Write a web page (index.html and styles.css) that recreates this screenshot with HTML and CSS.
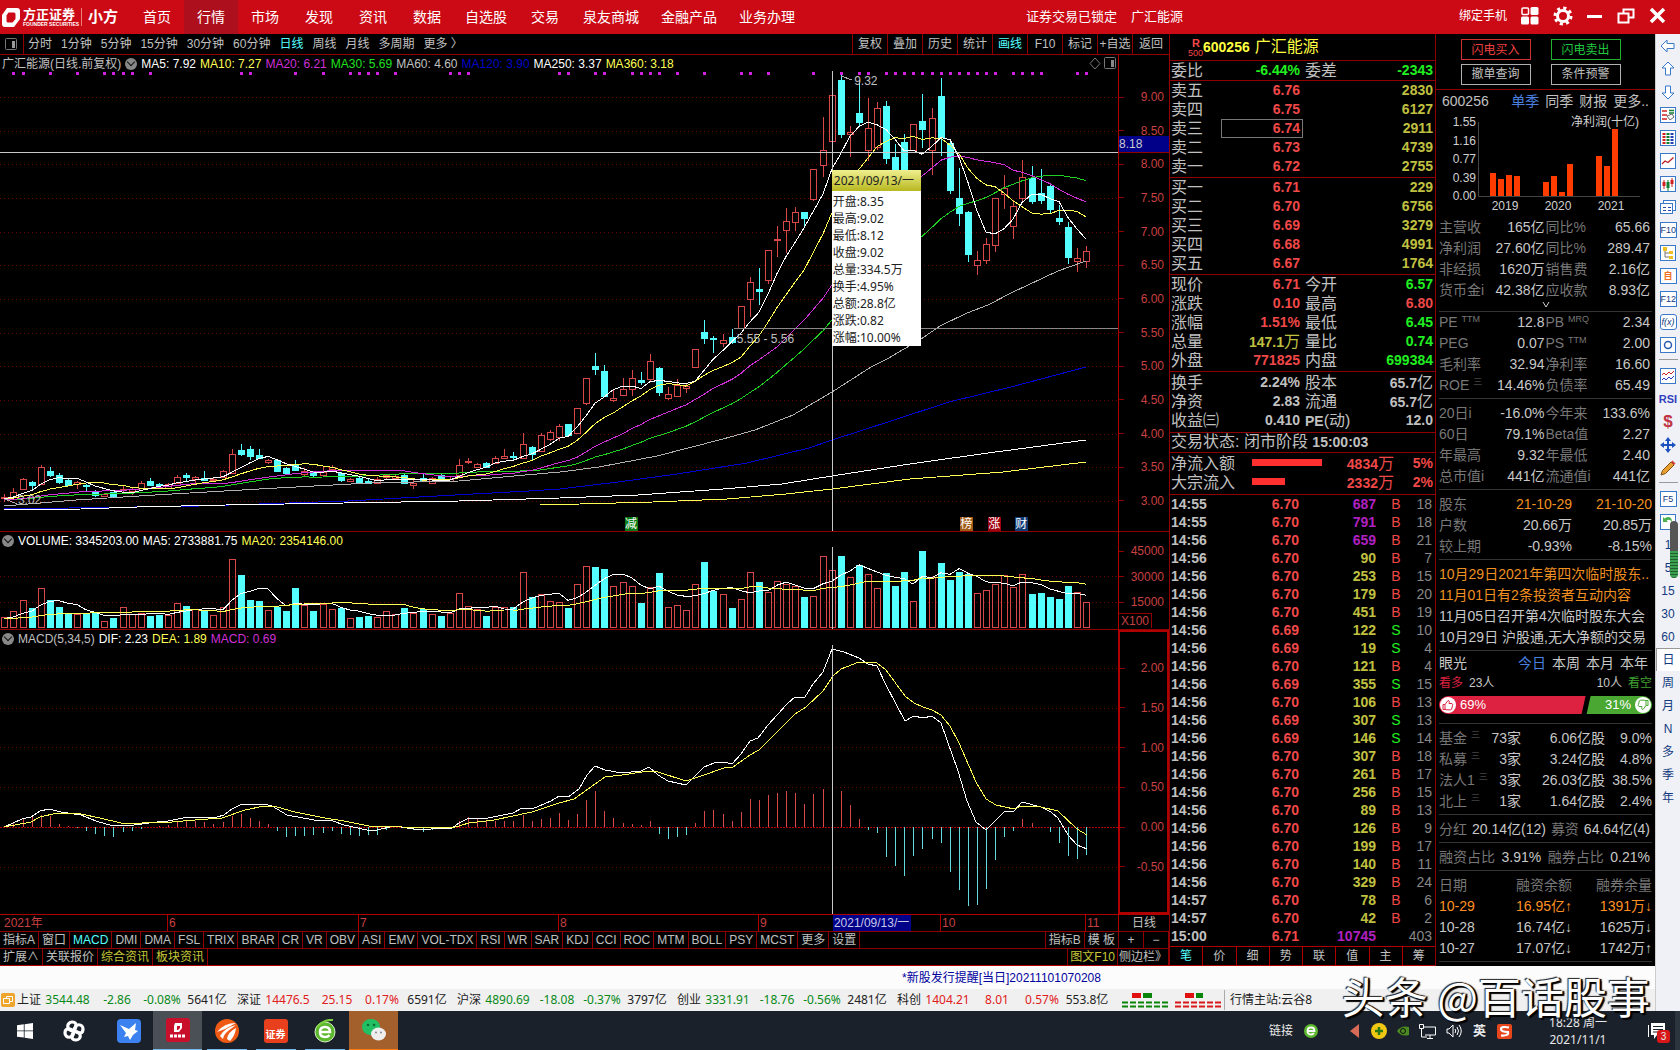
FILE: index.html
```
<!DOCTYPE html>
<html lang="zh-CN">
<head>
  <meta charset="UTF-8">
  <meta name="viewport" content="width=device-width, initial-scale=1.0">
  <title>方正证券 小方 - 广汇能源</title>
  <link rel="stylesheet" href="styles.css">
</head>
<body>
  <header class="topbar">
    <div class="logo">
      <svg width="18" height="19" viewBox="0 0 18 19"><path d="M5 0h10a3 3 0 0 1 3 3v8l-6 8H3a3 3 0 0 1-3-3V7z" fill="#fff"/><path d="M6.500 4.500h5.500q1.500 0 1.500 1.500v5l-3 3.500H6q-1.500 0-1.500-1.500V7.500z" fill="#cb0a16"/></svg>
      <div class="logo-name">方正证券<small>FOUNDER SECURITIES</small></div>
      <div class="logo-sub">小方</div>
    </div>
    <nav class="menu">
      <a href="#">首页</a><a href="#" class="active">行情</a><a href="#">市场</a><a href="#">发现</a><a href="#">资讯</a><a href="#">数据</a><a href="#">自选股</a><a href="#">交易</a><a href="#">泉友商城</a><a href="#">金融产品</a><a href="#">业务办理</a>
    </nav>
    <div class="account"><span>证券交易已锁定</span><span>广汇能源</span></div>
    <div class="window-tools">
      <a href="#">绑定手机</a>
      <button aria-label="应用"><svg width="18" height="18" viewBox="0 0 18 18"><rect x="1" y="1" width="6.500" height="6.500" rx="1" fill="none" stroke="#fff" stroke-width="1.500"/><rect x="9.500" width="8" height="8" rx="1.500" fill="#fff"/><rect y="9.500" width="8" height="8" rx="1.500" fill="#fff"/><rect x="9.500" y="9.500" width="8" height="8" rx="1.500" fill="#fff"/></svg></button>
      <button aria-label="设置"><svg width="20" height="20" viewBox="0 0 20 20"><circle cx="10" cy="10" r="5.500" fill="none" stroke="#fff" stroke-width="3"/><circle cx="10" cy="10" r="8" fill="none" stroke="#fff" stroke-width="3" stroke-dasharray="3.140 3.140"/></svg></button>
      <button aria-label="最小化"><svg width="16" height="18" viewBox="0 0 16 18"><path d="M0 8h15v3H0z" fill="#fff"/></svg></button>
      <button aria-label="还原"><svg width="18" height="18" viewBox="0 0 18 18"><path d="M6.500 6V2.500h10v8H12M1.500 6.500h10v9h-10z" fill="none" stroke="#fff" stroke-width="2"/></svg></button>
      <button aria-label="关闭"><svg width="17" height="18" viewBox="0 0 17 18"><path d="M2 2l13 13M15 2L2 15" stroke="#fff" stroke-width="3.500"/></svg></button>
    </div>
  </header>

  <div class="workspace">
    <div class="main">
      <div class="terminal">
        <section class="charts">
          <div class="periods">
            <button class="dock" aria-label="侧栏"><svg width="13" height="13" viewBox="0 0 13 13"><rect x=".5" y=".5" width="11" height="11" rx="1" fill="none" stroke="#777"/><path d="M7 3h3v7H7z" fill="#999"/></svg></button>
            <div class="period-list">
              <button>分时</button><button>1分钟</button><button>5分钟</button><button>15分钟</button><button>30分钟</button><button>60分钟</button><button class="on">日线</button><button>周线</button><button>月线</button><button>多周期</button><button>更多 〉</button>
            </div>
            <div class="chart-tools">
              <button>复权</button><button>叠加</button><button>历史</button><button>统计</button><button class="on">画线</button><button>F10</button><button>标记</button><button>+自选</button><button>返回</button>
            </div>
          </div>

          <div class="pane">
            <div class="plot">
              <svg id="price" viewBox="0 55 1118 476" preserveAspectRatio="none"></svg>
              <div class="legend">
                <span>广汇能源(日线.前复权)</span><i class="fold"></i>
                <span class="white">MA5: 7.92</span><span class="yellow">MA10: 7.27</span><span class="purple">MA20: 6.21</span><span class="green">MA30: 5.69</span><span>MA60: 4.60</span><span class="blue">MA120: 3.90</span><span class="white">MA250: 3.37</span><span class="yellow">MA360: 3.18</span>
                <svg class="corner" width="27" height="13" viewBox="0 0 27 13"><path d="M6 1l5 5.500-5 5.500-5-5.500z" fill="none" stroke="#777"/><rect x="15.500" y=".5" width="11" height="11" rx="1" fill="none" stroke="#777"/><path d="M22 3h3v7h-3z" fill="#888"/></svg>
              </div>
              <span class="mark mark-high">9.32</span>
              <span class="mark mark-low">3.02</span>
              <span class="mark mark-gap">5.55 - 5.56</span>
              <span class="event event-cut">减</span>
              <span class="event event-rank">榜</span>
              <span class="event event-rise">涨</span>
              <span class="event event-report">财</span>
              <div class="tip">
                <h4>2021/09/13/一</h4>
                <p>开盘:8.35</p><p>最高:9.02</p><p>最低:8.12</p><p>收盘:9.02</p><p>总量:334.5万</p><p>换手:4.95%</p><p>总额:28.8亿</p><p>涨跌:0.82</p><p>涨幅:10.00%</p>
              </div>
            </div>
            <div class="axis axis-price">
              <span>9.00</span><span>8.50</span><span>8.00</span><span>7.50</span><span>7.00</span><span>6.50</span><span>6.00</span><span>5.50</span><span>5.00</span><span>4.50</span><span>4.00</span><span>3.50</span><span>3.00</span>
              <b class="cursor-price">8.18</b>
            </div>
          </div>

          <div class="pane">
            <div class="plot">
              <svg id="volume" viewBox="0 532 1118 97" preserveAspectRatio="none"></svg>
              <div class="legend"><i class="fold"></i><span class="white">VOLUME: 3345203.00</span><span class="white">MA5: 2733881.75</span><span class="yellow">MA20: 2354146.00</span></div>
            </div>
            <div class="axis axis-volume">
              <span>45000</span><span>30000</span><span>15000</span>
              <b class="unit">X100</b>
            </div>
          </div>

          <div class="pane pane-macd">
            <div class="plot">
              <svg id="macd" viewBox="0 630 1118 284" preserveAspectRatio="none"></svg>
              <div class="legend"><i class="fold"></i><span>MACD(5,34,5)</span><span class="white">DIF: 2.23</span><span class="yellow">DEA: 1.89</span><span class="purple">MACD: 0.69</span></div>
            </div>
            <div class="axis axis-macd">
              <span>2.00</span><span>1.50</span><span>1.00</span><span>0.50</span><span>0.00</span><span>-0.50</span>
            </div>
          </div>

          <div class="dates">
            <div class="months"><span>2021年</span><span>6</span><span>7</span><span>8</span><span>9</span><span>10</span><span>11</span><b>2021/09/13/一</b></div>
            <div class="cycle">日线</div>
          </div>
          <div class="tabs">
            <button>指标A</button><button>窗口</button><button class="on">MACD</button><button>DMI</button><button>DMA</button><button>FSL</button><button>TRIX</button><button>BRAR</button><button>CR</button><button>VR</button><button>OBV</button><button>ASI</button><button>EMV</button><button>VOL-TDX</button><button>RSI</button><button>WR</button><button>SAR</button><button>KDJ</button><button>CCI</button><button>ROC</button><button>MTM</button><button>BOLL</button><button>PSY</button><button>MCST</button><button>更多</button><button>设置</button>
            <button class="push">指标B</button><button>模 板</button><button class="zoom">+</button><button class="zoom">−</button>
          </div>
          <div class="tabs tabs-more">
            <button>扩展∧</button><button>关联报价</button><button class="gold">综合资讯</button><button class="gold">板块资讯</button>
            <button class="push gold">图文F10</button><button class="sidebar">侧边栏》</button>
          </div>
        </section>

        <section class="quote">
          <h1><span class="tag"><b>R</b>500</span><strong>600256</strong> 广汇能源</h1>
          <div class="block">
            <div class="row"><span>委比</span><b class="down">-6.44%</b><span>委差</span><b class="down">-2343</b></div>
          </div>
          <div class="block">
            <div class="row book"><span>卖五</span><b class="up">6.76</b><b class="vol">2830</b></div>
            <div class="row book"><span>卖四</span><b class="up">6.75</b><b class="vol">6127</b></div>
            <div class="row book picked"><span>卖三</span><b class="up">6.74</b><b class="vol">2911</b></div>
            <div class="row book"><span>卖二</span><b class="up">6.73</b><b class="vol">4739</b></div>
            <div class="row book"><span>卖一</span><b class="up">6.72</b><b class="vol">2755</b></div>
          </div>
          <div class="block">
            <div class="row book"><span>买一</span><b class="up">6.71</b><b class="vol">229</b></div>
            <div class="row book"><span>买二</span><b class="up">6.70</b><b class="vol">6756</b></div>
            <div class="row book"><span>买三</span><b class="up">6.69</b><b class="vol">3279</b></div>
            <div class="row book"><span>买四</span><b class="up">6.68</b><b class="vol">4991</b></div>
            <div class="row book"><span>买五</span><b class="up">6.67</b><b class="vol">1764</b></div>
          </div>
          <div class="block">
            <div class="row"><span>现价</span><b class="up">6.71</b><span>今开</span><b class="down">6.57</b></div>
            <div class="row"><span>涨跌</span><b class="up">0.10</b><span>最高</span><b class="up">6.80</b></div>
            <div class="row"><span>涨幅</span><b class="up">1.51%</b><span>最低</span><b class="down">6.45</b></div>
            <div class="row"><span>总量</span><b class="vol">147.1<em>万</em></b><span>量比</span><b class="down">0.74</b></div>
            <div class="row"><span>外盘</span><b class="up">771825</b><span>内盘</span><b class="down">699384</b></div>
          </div>
          <div class="block block-capital">
            <div class="row"><span>换手</span><b>2.24%</b><span>股本</span><b>65.7<em>亿</em></b></div>
            <div class="row"><span>净资</span><b>2.83</b><span>流通</span><b>65.7<em>亿</em></b></div>
            <div class="row"><span>收益㈢</span><b>0.410</b><span><strong>PE</strong>(动)</span><b>12.0</b></div>
          </div>
          <div class="block state">交易状态: 闭市阶段 <b>15:00:03</b></div>
          <div class="block block-flow">
            <div class="flow"><span>净流入额</span><i style="width:70px"></i><b>4834<em>万</em></b><b>5%</b></div>
            <div class="flow"><span>大宗流入</span><i style="width:33px"></i><b>2332<em>万</em></b><b>2%</b></div>
          </div>
          <table class="ticks"><tbody id="ticks"></tbody></table>
          <div class="quote-tabs">
            <button class="on">笔</button><button>价</button><button>细</button><button>势</button><button>联</button><button>值</button><button>主</button><button>筹</button>
          </div>
        </section>

        <section class="info">
          <div class="orders">
            <button class="buy">闪电买入</button><button class="sell">闪电卖出</button>
            <button>撤单查询</button><button>条件预警</button>
          </div>
          <div class="report-tabs"><span>600256</span><a href="#" class="on">单季</a><a href="#">同季</a><a href="#">财报</a><a href="#">更多..</a></div>
          <svg class="profit" viewBox="0 0 219 102">
            <g text-anchor="end">
              <text x="40" y="14">1.55</text><text x="40" y="33">1.16</text><text x="40" y="51">0.77</text><text x="40" y="70">0.39</text><text x="40" y="88">0.00</text>
              <text x="203" y="14">净利润(十亿)</text>
            </g>
            <path d="M42.500 10v74.500H204" fill="none" stroke="#444"/>
            <path d="M54 61h6v23h-6zM62 67h6v17h-6zM70 63h6v21h-6zM78 64h6v20h-6zM107 70h6v14h-6zM115 64h6v20h-6zM123 80h6v4h-6zM131 52h6v32h-6zM160 44h6v40h-6zM168 54h6v30h-6zM176 17h6v67h-6z" fill="#ff3c00"/>
            <g text-anchor="middle"><text x="69" y="98">2019</text><text x="122" y="98">2020</text><text x="175" y="98">2021</text></g>
          </svg>
          <div class="facts facts-first">
            <div class="pair"><span>主营收</span><b>165亿</b><span>同比%</span><b>65.66</b></div>
            <div class="pair"><span>净利润</span><b>27.60亿</b><span>同比%</span><b>289.47</b></div>
            <div class="pair"><span>非经损</span><b>1620万</b><span>销售费</span><b>2.16亿</b></div>
            <div class="pair"><span>货币金i</span><b>42.38亿</b><span>应收款</span><b>8.93亿</b></div>
            <svg class="chevron" width="8" height="8" viewBox="0 0 8 8"><path d="M1 1l3 5 3-5" fill="none" stroke="#ccc"/></svg>
          </div>
          <div class="facts facts-ratio">
            <div class="pair"><span>PE <sup>TTM</sup></span><b>12.8</b><span>PB <sup>MRQ</sup></span><b>2.34</b></div>
            <div class="pair"><span>PEG</span><b>0.07</b><span>PS <sup>TTM</sup></span><b>2.00</b></div>
            <div class="pair"><span>毛利率</span><b>32.94</b><span>净利率</span><b>16.60</b></div>
            <div class="pair"><span>ROE <sup class="dim">三</sup></span><b>14.46%</b><span>负债率</span><b>65.49</b></div>
          </div>
          <div class="facts">
            <div class="pair"><span>20日i</span><b>-16.0%</b><span>今年来</span><b>133.6%</b></div>
            <div class="pair"><span>60日</span><b>79.1%</b><span>Beta值</span><b>2.27</b></div>
            <div class="pair"><span>年最高</span><b>9.32</b><span>年最低</span><b>2.40</b></div>
            <div class="pair"><span>总市值i</span><b>441亿</b><span>流通值i</span><b>441亿</b></div>
          </div>
          <div class="facts">
            <table class="three">
              <tr class="orange"><th>股东</th><td>21-10-29</td><td>21-10-20</td></tr>
              <tr><th>户数</th><td>20.66万</td><td>20.85万</td></tr>
              <tr><th>较上期</th><td>-0.93%</td><td>-8.15%</td></tr>
            </table>
          </div>
          <div class="facts events">
            <a href="#" class="orange">10月29日2021年第四次临时股东..</a>
            <a href="#" class="orange">11月01日有2条投资者互动内容</a>
            <a href="#">11月05日召开第4次临时股东大会</a>
            <a href="#">10月29日 沪股通,无大净额的交易</a>
          </div>
          <div class="facts sight">
            <div class="sight-tabs"><span>眼光</span><a href="#" class="on">今日</a><a href="#">本周</a><a href="#">本月</a><a href="#">本年</a></div>
            <div class="votes"><b class="bull">看多</b><span>23人</span><span class="push">10人</span><b class="bear">看空</b></div>
            <div class="meter">
              <div class="bulls"><svg width="16" height="16" viewBox="0 0 16 16"><circle cx="8" cy="8" r="8" fill="#fff"/><path d="M3 7.500h2v5H3zM5 7.500L8 3.500c1.500 0 1.500 1 1 3h3q1.200.5.5 2l-.8 3.500q-.3.800-1.200.800H6L5 12" fill="none" stroke="#dd2140"/></svg>69%</div>
              <div class="bears">31%<svg width="16" height="16" viewBox="0 0 16 16"><circle cx="8" cy="8" r="8" fill="#fff"/><path d="M13 8.500h-2v-5h2zM11 8.500L8 12.500c-1.500 0-1.500-1-1-3H4q-1.200-.5-.5-2L4.300 4q.3-.8 1.200-.8H10l1 .8" fill="none" stroke="#4aa832"/></svg></div>
            </div>
          </div>
          <div class="facts">
            <table class="holders">
              <tr><th>基金 <sup class="dim">三</sup></th><td>73家</td><td>6.06亿股</td><td>9.0%</td></tr>
              <tr><th>私募 <sup class="dim">三</sup></th><td>3家</td><td>3.24亿股</td><td>4.8%</td></tr>
              <tr><th>法人1 <sup class="dim">三</sup></th><td>3家</td><td>26.03亿股</td><td>38.5%</td></tr>
              <tr><th>北上 <sup class="dim">三</sup></th><td>1家</td><td>1.64亿股</td><td>2.4%</td></tr>
            </table>
          </div>
          <div class="facts"><div class="spread"><span>分红</span><b>20.14亿(12)</b><span>募资</span><b>64.64亿(4)</b></div></div>
          <div class="facts"><div class="spread"><span>融资占比</span><b>3.91%</b><span>融券占比</span><b>0.21%</b></div></div>
          <div class="facts facts-last">
            <table class="three">
              <tr><th>日期</th><th>融资余额</th><th>融券余量</th></tr>
              <tr class="amber"><td>10-29</td><td>16.95亿↑</td><td>1391万↓</td></tr>
              <tr><td>10-28</td><td>16.74亿↓</td><td>1625万↓</td></tr>
              <tr><td>10-27</td><td>17.07亿↓</td><td>1742万↑</td></tr>
            </table>
          </div>
        </section>
      </div>

      <div class="news"><a href="#">*新股发行提醒[当日]20211101070208</a></div>
      <div class="status">
        <svg class="status-icon" width="14" height="14" viewBox="0 0 14 14"><rect width="14" height="14" rx="2" fill="#eda52c"/><path d="M5.500 5V3.500h6v5H9M2.500 5.500h6v5h-6z" fill="none" stroke="#fff"/></svg>
        <div class="index"><span>上证</span><b class="fall">3544.48</b><b class="fall">-2.86</b><b class="fall">-0.08%</b><b>5641亿</b></div>
        <div class="index"><span>深证</span><b class="rise">14476.5</b><b class="rise">25.15</b><b class="rise">0.17%</b><b>6591亿</b></div>
        <div class="index"><span>沪深</span><b class="fall">4890.69</b><b class="fall">-18.08</b><b class="fall">-0.37%</b><b>3797亿</b></div>
        <div class="index"><span>创业</span><b class="fall">3331.91</b><b class="fall">-18.76</b><b class="fall">-0.56%</b><b>2481亿</b></div>
        <div class="index"><span>科创</span><b class="rise">1404.21</b><b class="rise">8.01</b><b class="rise">0.57%</b><b>553.8亿</b></div>
        <svg class="heat" width="100" height="16" viewBox="0 0 100 16">
          <path d="M0 10.500h47M0 14.500h47" stroke="#0a850a" stroke-width="2" stroke-dasharray="6 2"/>
          <path d="M53 10.500h47M53 14.500h47" stroke="#d81818" stroke-width="2" stroke-dasharray="6 2"/>
          <path d="M10 1h9v5h-9zM63 1h9v5h-9z" fill="#e01010"/><path d="M21 1h9v5h-9zM74 1h7v5h-7z" fill="#0a850a"/>
        </svg>
        <span class="server">行情主站:云谷8</span>
      </div>
    </div>

    <aside class="rail">
      <button aria-label="后退"><svg viewBox="0 0 16 16"><path d="M1 8l6-6v3.500h7v5H7V14z" class="arrow"/></svg></button>
      <button aria-label="上翻"><svg viewBox="0 0 16 16"><path d="M8 1l6 6h-3.500v7h-5V7H2z" class="arrow"/></svg></button>
      <button aria-label="下翻"><svg viewBox="0 0 16 16"><path d="M8 15l6-6h-3.500V2h-5v7H2z" class="arrow"/></svg></button>
      <button aria-label="报表"><svg viewBox="0 0 16 16"><rect class="box" x=".5" y=".5" width="15" height="15"/><path d="M2 4h5M2 8h5M2 12h5" stroke="#d02020" stroke-width="1.500"/><path d="M9 3.500h5M9 6h5" stroke="#108030" stroke-width="1.500"/><path d="M7 9l3 4 4-3-2-3z" fill="#fff" stroke="#666"/></svg></button>
      <button aria-label="列表"><svg viewBox="0 0 16 16"><rect class="box" x=".5" y=".5" width="15" height="15"/><path d="M4 3v11" stroke="#d02020" stroke-width="3" stroke-dasharray="2 1"/><path d="M8 3v11" stroke="#108030" stroke-width="3" stroke-dasharray="2 1"/><path d="M12 3v11" stroke="#2040b0" stroke-width="3" stroke-dasharray="2 1"/></svg></button>
      <button aria-label="走势"><svg viewBox="0 0 16 16"><rect class="box" x=".5" y=".5" width="15" height="15"/><path d="M2 11l3-3 3 1.500 5.500-5" fill="none" stroke="#c02020" stroke-width="1.300"/></svg></button>
      <button aria-label="K线"><svg viewBox="0 0 16 16"><rect class="box" x=".5" y=".5" width="15" height="15"/><path d="M4 4v9M12 2v9" stroke="#d02020"/><path d="M2.500 6h3v4h-3zM10.500 4h3v4h-3z" fill="#d02020"/><path d="M8 4v11" stroke="#108030"/><path d="M6.500 6h3v6h-3z" fill="#108030"/></svg></button>
      <button aria-label="多窗"><svg viewBox="0 0 16 16"><rect class="box" x="3.500" y="1.500" width="12" height="10"/><rect class="box" x=".5" y="4.500" width="12" height="10"/><path d="M3 8.500h3M8 8.500h3M3 11.500h3M8 11.500h3" stroke="#2a4ab0"/></svg></button>
      <button class="key"><span>F10</span></button>
      <button aria-label="板块"><svg viewBox="0 0 16 16"><rect class="box" x=".5" y=".5" width="15" height="15"/><path d="M5 5v7h4M5 8h4" fill="none" stroke="#777"/><path d="M3 2h4v4H3zM9 6h4v3H9zM9 11h4v3H9z" fill="#f0c020"/></svg></button>
      <button class="key self"><span>自</span></button>
      <button class="key"><span>F12</span></button>
      <button class="key fx"><span>f(x)</span></button>
      <button aria-label="圆"><svg viewBox="0 0 16 16"><rect class="box" x=".5" y=".5" width="15" height="15"/><circle cx="8" cy="8" r="3.500" fill="none" stroke="#2a5ab0" stroke-width="1.500"/></svg></button>
      <hr>
      <button aria-label="叠加"><svg viewBox="0 0 16 16"><rect class="box" x=".5" y=".5" width="15" height="15"/><path d="M2 7l2-2 2 2 3-3 2 2 3-3" fill="none" stroke="#d02020"/><path d="M2 12l2-2 2 2 3-3 2 2 3-3" fill="none" stroke="#2040c0"/></svg></button>
      <button class="rsi">RSI</button>
      <button class="money">$</button>
      <button aria-label="移动"><svg viewBox="0 0 16 16"><path d="M8 0l3 4H5zM8 16l3-4H5zM0 8l4-3v6zM16 8l-4-3v6z" fill="#1c50c0"/><path d="M8 4v8M4 8h8" stroke="#1c50c0" stroke-width="2"/></svg></button>
      <button aria-label="画笔"><svg viewBox="0 0 16 16"><path d="M1 15l1.500-4.500L11 2l3 3-8.500 8.500z" fill="#e8a030" stroke="#805010"/><path d="M11 2l1.500-1.500 3 3L14 5z" fill="#d04040"/></svg></button>
      <hr>
      <button class="key"><span>F5</span></button>
      <button aria-label="刷新"><svg viewBox="0 0 16 16"><rect class="box" x=".5" y=".5" width="15" height="15"/><path d="M3 3v5h5L6.500 6.500q3-2 5.500 1.500 0-5-4-5-2 0-3.500 1.500z" fill="#4caf50"/></svg></button>
      <button>1</button><button>5</button><button>15</button><button>30</button><button>60</button><button class="day">日</button><button>周</button><button>月</button><button>N</button><button>多</button><button>季</button><button>年</button>
      <i class="gauge"></i>
    </aside>
  </div>

  <footer class="taskbar">
    <button aria-label="开始"><svg width="16" height="16" viewBox="0 0 16 16"><path d="M0 2.300l6.800-1v6.200H0zM7.600 1.200L16 0v7.500H7.600zM0 8.300h6.800v6.300L0 13.700zM7.600 8.300H16V16l-8.400-1.200z" fill="#fff"/></svg></button>
    <button aria-label="浏览"><svg width="22" height="22" viewBox="0 0 22 22"><g fill="none" stroke="#fff" stroke-width="3.200"><path d="M11 11C2 10 4 2 9 2s5 4 2 9"/><path d="M11 11c1-9 9-7 9-2s-4 5-9 2"/><path d="M11 11c9 1 7 9 2 9s-5-4-2-9"/><path d="M11 11c-1 9-9 7-9 2s4-5 9-2"/></g></svg></button>
    <button class="app spaced" aria-label="迅雷"><svg width="24" height="24" viewBox="0 0 24 24"><rect width="24" height="24" rx="4" fill="#3b82f0"/><path d="M3 6l9 4 7-6-1 7 3 1-5 4-3 5-2-4-4 1 2-4z" fill="#fff"/></svg></button>
    <button class="app active" aria-label="小方"><svg width="24" height="24" viewBox="0 0 24 24"><rect width="24" height="24" rx="3" fill="#c8102a"/><path d="M9 5h7v5l-3 4H8V8z" fill="#fff"/><path d="M11 8h3v2l-2 2h-1z" fill="#c8102a"/><path d="M4 18h16" stroke="#fff" stroke-width="3" stroke-dasharray="3 1"/></svg></button>
    <button class="app run" aria-label="东方财富"><svg width="24" height="24" viewBox="0 0 24 24"><circle cx="12" cy="12" r="12" fill="#ef5a14"/><path d="M2 13Q9 4 21 4L10 10zM5 17q4-8 16-11l-8 6q-4 3-5 8zM12 20q1-7 9-11-1 8-6 13z" fill="#fff"/></svg></button>
    <button class="app run sec" aria-label="证券"><span>证券</span></button>
    <button class="app run" aria-label="浏览器"><svg width="22" height="24" viewBox="0 0 22 24"><circle cx="11" cy="13" r="10" fill="#5cb82c" stroke="#d8f0c8"/><path d="M6 13h10q0-5-5-5t-5 5 5 5q3 0 4.500-2" fill="none" stroke="#fff" stroke-width="2.500"/><path d="M3 8Q10 0 19 1" fill="none" stroke="#7ccf3c" stroke-width="2"/></svg></button>
    <button class="app wechat" aria-label="微信"><svg width="26" height="24" viewBox="0 0 26 24"><ellipse cx="10" cy="9" rx="9" ry="8" fill="#22c064"/><circle cx="7" cy="7" r="1.300" fill="#0b6b35"/><circle cx="13" cy="7" r="1.300" fill="#0b6b35"/><ellipse cx="17.500" cy="16" rx="7.500" ry="6.500" fill="#eee"/><circle cx="15" cy="14.500" r="1" fill="#888"/><circle cx="20" cy="14.500" r="1" fill="#888"/></svg></button>
    <div class="tray">
      <span>链接</span>
      <svg class="link-icon" width="16" height="16" viewBox="0 0 16 16"><circle cx="8" cy="8" r="7" fill="#5cb82c"/><path d="M4.500 8h7q0-3.500-3.500-3.500T4.500 8 8 11.500q2 0 3-1.500" fill="none" stroke="#fff" stroke-width="1.800"/></svg>
      <svg width="12" height="14" viewBox="0 0 12 14"><path d="M10 0v14L1 7z" fill="#d86a58"/></svg>
      <svg width="16" height="16" viewBox="0 0 16 16"><circle cx="8" cy="8" r="8" fill="#f0c814"/><path d="M8 4v8M4 8h8" stroke="#2a7a10" stroke-width="2.500"/></svg>
      <svg width="12" height="10" viewBox="0 0 12 10"><path d="M0 5q4-6 12-4v8Q4 11 0 5z" fill="#4a8a20"/><circle cx="6" cy="5" r="2.500" fill="none" stroke="#111"/></svg>
      <svg width="17" height="15" viewBox="0 0 17 15"><path d="M4.500 3h12v8H6M2.500 4v9H8M8 14.500h6M11 11v3M.5.500h4v4h-4z" fill="none" stroke="#fff"/></svg>
      <svg width="17" height="14" viewBox="0 0 17 14"><path d="M1 5h2l4-4v12L3 9H1zM9 5q1.500 2 0 4M11 3q3 4 0 8M13 1q4.500 6 0 12" fill="none" stroke="#fff"/></svg>
      <b>英</b>
      <svg width="17" height="17" viewBox="0 0 17 17"><rect x="1" y="1" width="15" height="15" rx="2" fill="#e8461c"/><path d="M13 4.500Q5 3 5 6t7 3q1 4-7 3.500" fill="none" stroke="#fff" stroke-width="2.200"/></svg>
    </div>
    <div class="clock">18:28 周一<br>2021/11/1</div>
    <div class="notice"><svg width="18" height="18" viewBox="0 0 18 18"><path d="M3 1h14v12H9l-3 4v-4H3z" fill="#fff"/><path d="M5 4.500h10M5 7.500h10M5 10h6" stroke="#1a212b"/><path d="M.5 3v12" stroke="#fff"/></svg><b>3</b></div>
  </footer>
  <div class="watermark">头条 @百话股事</div>

  <script src="chart.js"></script>
</body>
</html>
```
FILE: styles.css
```
* {
  box-sizing: border-box;
}
body {
  margin: 0;
  min-height: 100vh;
  display: flex;
  flex-direction: column;
  position: relative;
  background: #000;
  color: #c0c0c0;
  font-family: "Liberation Sans", "Noto Sans CJK SC", sans-serif;
  font-size: 12px;
  line-height: 16px;
  overflow-x: hidden;
}
a {
  color: inherit;
  text-decoration: none;
}
button {
  margin: 0;
  padding: 0;
  border: 0;
  background: none;
  color: inherit;
  font: inherit;
  white-space: nowrap;
}
svg {
  display: block;
  flex: none;
}
em, i {
  font-style: normal;
}
table {
  width: 100%;
  border-collapse: collapse;
}
th, td {
  padding: 0;
  font-weight: normal;
}
.white { color: #fff; }
.yellow { color: #ffff54; }
.purple { color: #d030d8; }
.green { color: #20e020; }
.blue { color: #0000c8; }
.on { color: #54ffff; }
.gold { color: #c8c838; }
.push { margin-left: auto; }

/* top bar */
.topbar {
  display: flex;
  height: 34px;
  background: #cb0a16;
  color: #fff;
}
.logo {
  width: 130px;
  padding-left: 2px;
  display: flex;
  align-items: center;
}
.logo-name {
  width: 52px;
  margin-left: 3px;
  font-size: 13px;
  line-height: 14px;
  font-weight: bold;
}
.logo-name small {
  display: block;
  font-size: 5px;
  line-height: 5px;
  white-space: nowrap;
}
.logo-sub {
  margin-left: 6px;
  padding-left: 6px;
  border-left: 1px solid #f08080;
  font-size: 15px;
  line-height: 18px;
  font-weight: bold;
}
.menu {
  display: flex;
  font-size: 14px;
  line-height: 34px;
}
.menu a {
  min-width: 54px;
  padding: 0 11px;
  text-align: center;
}
.menu .active {
  background: #ae0f1c;
}
.account {
  flex: 1;
  display: flex;
  justify-content: flex-end;
  gap: 14px;
  padding-right: 276px;
  font-size: 13px;
  line-height: 34px;
  white-space: nowrap;
}
.window-tools {
  display: flex;
  align-items: center;
  gap: 14px;
  padding: 0 14px 2px 0;
  white-space: nowrap;
}

/* frame */
.workspace {
  flex: 1;
  display: flex;
}
.main {
  flex: 1;
  min-width: 0;
}
.terminal {
  display: flex;
}
.charts {
  flex: 1;
  min-width: 0;
  display: grid;
  grid-template-columns: minmax(0, 1fr);
  grid-template-rows: 21px minmax(0, 477fr) minmax(0, 98fr) minmax(0, 284fr) 17px 17px 18px;
}
.periods {
  display: flex;
  border-bottom: 1px solid #900000;
  line-height: 20px;
}
.dock {
  width: 24px;
  padding-left: 5px;
  border-right: 1px solid #900000;
}
.period-list {
  flex: 1;
  display: flex;
  gap: 9px;
  padding-left: 4px;
}
.chart-tools {
  display: flex;
}
.chart-tools button {
  width: 35px;
  border-left: 1px solid #900000;
}
.chart-tools button:last-child {
  width: 37px;
}
.pane {
  display: flex;
  border-bottom: 1px solid #900000;
}
.pane-macd {
  border-bottom: 0;
}
.plot {
  flex: 1;
  min-width: 0;
  position: relative;
}
.plot > svg {
  position: absolute;
  width: 100%;
  height: 100%;
  shape-rendering: crispEdges;
}
.legend {
  position: relative;
  display: flex;
  align-items: center;
  gap: 4px;
  padding-left: 2px;
  height: 17px;
  white-space: nowrap;
}
.fold {
  width: 12px;
  height: 12px;
  border-radius: 6px;
  background: #888;
  display: flex;
  align-items: center;
  justify-content: center;
}
.fold::before {
  content: "";
  width: 5px;
  height: 5px;
  margin-top: -3px;
  border: solid #111;
  border-width: 0 1px 1px 0;
  transform: rotate(45deg);
}
.corner {
  margin: 0 2px 0 auto;
}
.mark {
  position: absolute;
}
.mark-high { left: 76.4%; top: 18px; }
.mark-low { left: 1.6%; top: 437px; }
.mark-gap { left: 65.9%; top: 276px; }
.event {
  position: absolute;
  bottom: 0;
  width: 13px;
  height: 14px;
  line-height: 14px;
  color: #fff;
}
.event-cut { left: 55.9%; background: #0a7a14; }
.event-rank { left: 85.9%; background: #a05a14; }
.event-rise { left: 88.4%; background: #a00010; }
.event-report { left: 90.8%; background: #103c78; }
.tip {
  position: absolute;
  left: 74.4%;
  top: 115px;
  width: 89px;
  background: #fff;
  color: #222;
  font-family: "Noto Sans", "Noto Sans CJK SC", sans-serif;
  line-height: 17px;
}
.tip h4 {
  margin: 0;
  padding-left: 2px;
  background: linear-gradient(#efef90, #b8b820);
  font-weight: normal;
  line-height: 21px;
}
.tip p {
  position: relative;
  margin: 0;
  padding-left: 1px;
}
.tip h4 + p {
  margin-top: 2px;
}
.axis {
  position: relative;
  width: 51px;
  border-left: 1px solid #b00000;
  display: flex;
  flex-direction: column;
  justify-content: space-between;
  color: #c84040;
}
.axis span {
  display: flex;
  align-items: center;
  justify-content: space-between;
  padding-right: 5px;
}
.axis span::before {
  content: "";
  width: 5px;
  height: 1px;
  background: #900000;
}
.axis b {
  font-weight: normal;
}
.axis-price { padding: 34px 0 22px; }
.axis-volume { padding: 11px 0 1px; }
.axis-macd {
  padding: 28px 0 37px;
  border: 2px solid #b00000;
}
.axis-macd span {
  padding-right: 3px;
}
.cursor-price {
  position: absolute;
  top: 81px;
  left: 0;
  right: 0;
  border-bottom: 1px solid #900000;
  background: #000088;
  color: #ccc;
}
.unit {
  align-self: flex-start;
  height: 15px;
  line-height: 14px;
  padding: 0 2px;
  margin-top: -7px;
  border: solid #900000;
  border-width: 1px 1px 0 0;
}
.dates {
  display: flex;
  border-top: 1px solid #b00000;
}
.months {
  position: relative;
  flex: 1;
  display: grid;
  grid-template-columns: 167fr 191fr 200fr 200fr 182fr 145fr 33fr;
  color: #c84040;
}
.months span {
  padding-left: 1px;
  border-left: 1px solid #b00000;
}
.months span:first-child {
  padding-left: 4px;
  border-left: 0;
}
.months b {
  position: absolute;
  left: 74.5%;
  width: 78px;
  padding-left: 1px;
  background: #000088;
  color: #c8c8e8;
  font-weight: normal;
}
.cycle {
  width: 51px;
  border-left: 1px solid #b00000;
  text-align: center;
}
.tabs {
  display: flex;
  border-top: 1px solid #900000;
}
.tabs button {
  flex: none;
  padding: 0 3px;
  border-right: 1px solid #900000;
}
.tabs .push {
  margin-left: auto;
  border-left: 1px solid #900000;
}
.tabs .zoom {
  width: 25px;
}
.tabs-more {
  border-bottom: 1px solid #b00000;
}
.tabs-more .push {
  padding: 0 2px;
}
.tabs-more .sidebar {
  width: 51px;
  padding: 0 0 0 1px;
  text-align: left;
  overflow: hidden;
}

/* quote */
.quote {
  flex: none;
  width: 267px;
  border: solid #900000;
  border-width: 0 1px;
  font-size: 14px;
}
.quote h1 {
  display: flex;
  align-items: center;
  gap: 5px;
  height: 26px;
  margin: 0;
  color: #ffff40;
  font-size: 16px;
  font-weight: normal;
}
.quote h1 strong {
  font-size: 14px;
  margin-left: -5px;
}
.tag {
  width: 33px;
  padding-top: 2px;
  text-align: right;
  color: #f04848;
  font-size: 9px;
  line-height: 10px;
}
.tag b {
  display: block;
  padding-right: 3px;
  font-size: 11px;
}
.block {
  padding-bottom: 1px;
  border-top: 1px solid #900000;
}
.block-capital { padding: 1px 0 2px; }
.block-flow { padding: 1px 0 2px; }
.row {
  display: grid;
  grid-template-columns: 50px 79px 60px 1fr;
  padding: 0 2px 0 1px;
  line-height: 19px;
  height: 19px;
}
.row:first-child:last-child { height: 18px; }
.book {
  grid-template-columns: 50px 82px 1fr;
}
.book .up {
  padding-right: 3px;
}
.row span, .flow span, .state {
  font-size: 16px;
  white-space: nowrap;
}
.row span:nth-of-type(2) { padding-left: 5px; }
.row b, .flow b { text-align: right; }
.row em, .flow em { font-size: 16px; font-weight: normal; }
.row strong { font-size: 14px; }
.picked .up {
  outline: 1px solid #777;
  outline-offset: -1px;
}
.up { color: #f04848; }
.down { color: #20f020; }
.vol { color: #c0c040; }
.state {
  height: 20px;
  padding-left: 1px;
  line-height: 18px;
}
.state b { font-size: 14px; }
.flow {
  display: grid;
  grid-template-columns: 81px 71px 71px 1fr;
  padding: 0 2px 0 1px;
  height: 19px;
  line-height: 19px;
  color: #f04848;
}
.flow span { color: #c0c0c0; }
.flow i {
  height: 7px;
  margin-top: 5px;
  background: #ff3030;
}
.ticks {
  margin-bottom: 1px;
  border-top: 1px solid #900000;
  line-height: 18px;
}
.ticks td {
  height: 18px;
  text-align: right;
  font-weight: bold;
}
.ticks td:first-child { padding-left: 1px; text-align: left; }
.ticks td:nth-child(2) { width: 74px; color: #f04848; }
.ticks td:nth-child(3) { width: 77px; color: #c0c040; }
.ticks td:nth-child(4) { width: 32px; padding-left: 8px; text-align: center; font-weight: normal; }
.ticks td:nth-child(5) { width: 27px; padding-right: 3px; color: #888; font-weight: normal; }
.ticks .big td:nth-child(3) { color: #b020c0; }
.quote-tabs {
  display: flex;
  height: 20px;
  border: solid #b00000;
  border-width: 1px 0;
  font-size: 12px;
}
.quote-tabs button {
  flex: 1;
}
.quote-tabs button + button {
  border-left: 1px solid #b00000;
}

/* company info */
.info {
  flex: none;
  width: 219px;
  font-size: 14px;
}
.orders {
  display: grid;
  grid-template-columns: 70px 70px;
  justify-content: center;
  gap: 3px 20px;
  padding: 5px 10px 4px 0;
  height: 56px;
  border-bottom: 1px solid #900000;
  font-size: 12px;
}
.orders button {
  height: 21px;
  border: 1px solid #b0b0b0;
}
.orders .buy { color: #f04040; border-color: #d03030; }
.orders .sell { color: #20c840; border-color: #20b030; }
.report-tabs {
  display: flex;
  gap: 6px;
  padding: 0 6px;
  line-height: 22px;
}
.report-tabs span { margin-right: auto; }
.report-tabs .on, .sight-tabs .on { color: #4a80e0; }
.profit {
  width: 100%;
  font-size: 12px;
  fill: #d0d0d0;
}
.facts {
  margin: 0 3px;
  padding: 4px 0 2px;
  border-top: 1px solid #333;
  line-height: 21px;
  color: #777;
}
.facts b { font-weight: normal; color: #c8c8c8; }
.facts sup { font-size: 9px; line-height: 9px; vertical-align: 5px; }
.facts .dim { color: #444; }
.facts-first { border: 0; padding: 3px 0 0; }
.facts-ratio { padding: 0 0 2px; }
.chevron { margin: 0 auto 2px; }
.pair {
  display: flex;
  height: 21px;
  padding-right: 2px;
  white-space: nowrap;
}
.pair span { width: 47px; }
.pair b { flex: 1 0 58px; text-align: right; }
.pair span:nth-of-type(2) { padding-left: 1px; }
.three td, .holders td {
  height: 21px;
  text-align: right;
  color: #c8c8c8;
}
.three th { height: 21px; text-align: right; }
.three th:first-child, .three td:first-child, .holders th { text-align: left; }
.three td:nth-child(2) { width: 80px; }
.three td:nth-child(3) { width: 80px; }
.holders td:nth-child(2) { width: 30px; }
.holders td:nth-child(3) { width: 84px; }
.holders td:nth-child(4) { width: 47px; }
.orange td, .events .orange { color: #f09020; }
.amber td, .amber td:first-child { color: #ff9020; }
.events a {
  display: block;
  height: 21px;
  color: #c8c8c8;
  white-space: nowrap;
}
.sight { padding: 2px 0 9px; color: #c8c8c8; }
.sight-tabs, .votes {
  display: flex;
  gap: 6px;
  padding-right: 4px;
}
.sight-tabs span { margin-right: auto; }
.votes {
  padding-right: 0;
  height: 22px;
  line-height: 18px;
  font-size: 12px;
}
.votes .bull { color: #dd2140; }
.votes .bear { color: #40a030; }
.votes .push { margin-left: auto; }
.meter {
  display: flex;
  height: 18px;
  line-height: 18px;
  color: #fff;
  font-size: 13px;
}
.meter div {
  display: flex;
  align-items: center;
  gap: 4px;
}
.bulls {
  flex: 69;
  padding-left: 1px;
  background: #dd2140;
  border-radius: 9px 0 0 9px;
  clip-path: polygon(0 0, 100% 0, calc(100% - 4px) 100%, 0 100%);
}
.bears {
  flex: 31;
  justify-content: flex-end;
  padding-right: 1px;
  background: #4aa832;
  border-radius: 0 9px 9px 0;
  clip-path: polygon(5px 0, 100% 0, 100% 100%, 1px 100%);
}
.spread {
  display: flex;
  justify-content: space-between;
  padding-right: 2px;
  height: 21px;
  white-space: nowrap;
}
.facts-last { border-bottom: 1px solid #333; }

/* bottom bars */
.news {
  height: 23px;
  padding-left: 54.5%;
  background: #fcfcfc;
  color: #0000a0;
  line-height: 24px;
}
.status {
  display: flex;
  align-items: center;
  height: 22px;
  background: #f0f0f0;
  color: #222;
  font-family: "Noto Sans", "Noto Sans CJK SC", sans-serif;
}
.status-icon { margin: 0 2px 0 1px; }
.index {
  width: 220px;
  display: grid;
  grid-template-columns: 28px 45px 54px 36px 54px;
  text-align: center;
  white-space: nowrap;
}
.index span { text-align: left; }
.index b { font-weight: normal; justify-self: center; }
.rise { color: #e02020; }
.fall { color: #0a8a1a; }
.heat {
  margin-left: 5px;
  margin-right: 2px;
}
.server {
  padding-left: 5px;
  border-left: 1px solid #aaa;
  line-height: 20px;
}

/* tool rail */
.rail {
  position: relative;
  width: 25px;
  display: flex;
  flex-direction: column;
  align-items: center;
  background: #eff1f6;
  border-left: 1px solid #ccc;
  color: #123a80;
}
.rail button {
  width: 25px;
  height: 23px;
  flex: none;
  display: flex;
  align-items: center;
  justify-content: center;
}
.rail svg {
  width: 16px;
  height: 16px;
}
.rail hr {
  width: 19px;
  margin: 3px 0 4px;
  border: 0;
  border-top: 1px solid #999;
}
.rail .arrow { fill: #fff; stroke: #3a78c8; }
.rail .box { fill: #fff; stroke: #3a78c8; }
.rail .key span {
  width: 17px;
  height: 16px;
  border: 1px solid #3a78c8;
  background: #fff;
  font-size: 9px;
  line-height: 14px;
}
.rail .self span { color: #f07020; font-weight: bold; }
.rail .fx span { border-radius: 3px; font-style: italic; }
.rail .rsi { color: #3040c0; font-size: 11px; font-weight: bold; }
.rail .money { color: #c03040; font-size: 17px; font-weight: bold; }
.rail .day { border: solid #999; border-width: 1px 0 0 1px; background: #fff; }
.gauge {
  position: absolute;
  right: 2px;
  top: 487px;
  width: 8px;
  height: 57px;
  border-radius: 4px;
  background: linear-gradient(#555 30px, transparent 30px), repeating-linear-gradient(#3aa050 0 2px, #206030 2px 3px);
}

/* taskbar */
.taskbar {
  display: flex;
  align-items: stretch;
  height: 40px;
  background: #1a212b;
  color: #e8e8e8;
}
.taskbar button {
  width: 49px;
  display: flex;
  align-items: center;
  justify-content: center;
}
.taskbar .spaced { margin-left: 6px; }
.taskbar .active { background: #4b5057; border-bottom: 2px solid #76b9ed; }
.taskbar .run { position: relative; }
.taskbar .run::after {
  content: "";
  position: absolute;
  left: 5px;
  right: 4px;
  bottom: 0;
  height: 2px;
  background: #76b9ed;
}
.taskbar .sec span {
  width: 24px;
  height: 24px;
  padding-top: 9px;
  border-radius: 3px;
  background: #e8401c;
  color: #fff;
  font-size: 10px;
  line-height: 14px;
  font-weight: bold;
}
.taskbar .wechat { background: #a4602c; border-bottom: 2px solid #ff7a10; }
.tray {
  display: flex;
  align-items: center;
  gap: 10px;
  margin-left: auto;
}
.link-icon { margin-right: 20px; }
.tray b { font-size: 13px; }
.clock {
  width: 130px;
  padding-top: 3px;
  text-align: center;
  line-height: 17px;
  font-family: "Noto Sans", "Noto Sans CJK SC", sans-serif;
}
.notice {
  position: relative;
  width: 37px;
  padding: 11px 0 0 5px;
  border-right: 5px solid #2c343e;
}
.notice b {
  position: absolute;
  left: 14px;
  top: 19px;
  width: 13px;
  height: 13px;
  border-radius: 3px;
  background: #d81818;
  font-size: 10px;
  line-height: 13px;
  text-align: center;
  font-weight: normal;
}
.watermark {
  position: absolute;
  right: 30px;
  bottom: 32px;
  color: #fff;
  font-family: "Noto Sans CJK SC", sans-serif;
  font-size: 43px;
  line-height: 48px;
  text-shadow: -1px -1px 1px #222, 2px 2px 1px #000, 2px 0 1px #000;
  white-space: nowrap;
}
```
FILE: chart.js
```
var RED = '#d84848', CYAN = '#54ffff', GRID = '#700000';

// direction, high, body top, body bottom, low (screen units)
var candles = [
  ['r',494,497,498,502],['r',488,492,497,498],['r',478,479,489,490],['c',481,482,485,489],['r',465,467,484,484],
  ['c',467,471,475,477],['c',473,475,482,484],['c',479,480,485,486],['r',481,482,484,489],['c',484,485,486,491],
  ['c',490,491,495,497],['r',493,494,496,496],['c',492,492,497,497],['r',485,489,490,492],['r',488,489,491,495],
  ['r',481,483,488,488],['c',478,481,485,486],['c',483,484,485,487],['r',483,484,488,489],['r',475,477,483,484],
  ['c',473,475,477,481],['r',476,477,479,483],['c',471,478,480,481],['r',477,479,480,482],['r',470,471,477,478],
  ['r',449,454,473,474],['c',444,450,454,456],['c',446,449,456,460],['c',449,455,458,459],['r',459,460,462,464],
  ['c',460,460,471,472],['c',467,468,473,475],['c',460,465,470,471],['r',468,471,474,477],['c',472,473,475,477],
  ['r',466,472,475,476],['r',465,467,469,472],['c',472,473,480,482],['r',478,479,481,482],['c',477,478,483,484],
  ['c',478,481,483,484],['r',477,479,483,484],['r',474,475,477,479],['r',474,476,478,480],['c',474,475,483,484],
  ['r',479,483,485,489],['c',474,478,480,482],['r',477,478,483,484],['c',474,475,480,481],['r',477,479,481,482],
  ['r',459,465,475,476],['r',458,461,462,464],['r',463,464,467,468],['c',462,463,467,468],['r',456,458,463,464],
  ['r',449,456,458,459],['c',452,456,457,460],['r',433,444,458,458],['c',446,447,454,461],['r',433,435,451,451],
  ['r',430,432,439,441],['r',424,426,437,441],['c',424,424,435,435],['r',408,408,433,434],['r',378,378,403,405],
  ['c',353,366,369,375],['c',365,371,396,397],['r',390,398,400,402],['r',378,389,395,396],['r',370,378,389,396],
  ['c',372,380,382,385],['r',354,361,379,381],['c',367,368,392,396],['r',387,394,398,400],['r',379,385,396,397],
  ['r',384,386,388,393],['r',349,349,367,368],['c',320,332,338,344],['c',336,338,339,353],['r',334,340,343,347],
  ['c',329,337,342,344],['r',306,306,328,329],['r',277,282,299,317],['c',268,289,291,305],['r',250,250,280,284],
  ['r',226,239,240,257],['r',208,221,230,253],['r',207,212,222,231],['c',212,212,218,228],['r',169,169,199,201],
  ['r',117,150,165,177],['r',95,95,141,150],['c',75,80,134,138],['r',126,132,134,157],['c',80,113,122,127],
  ['r',98,128,150,161],['r',102,108,147,150],['c',101,106,158,164],['c',144,157,180,190],['c',134,142,180,190],
  ['r',124,124,150,151],['c',94,121,129,148],['r',108,118,150,175],['c',78,96,137,156],['c',141,143,190,194],
  ['c',168,198,213,226],['c',211,212,254,262],['r',251,260,265,275],['r',238,244,260,264],['r',198,198,245,252],
  ['r',175,188,194,209],['r',200,206,226,239],['r',160,177,198,202],['c',166,178,201,204],['c',169,193,200,204],
  ['c',183,186,209,214],['c',205,218,221,225],['c',222,227,257,264],['r',248,258,261,272],['r',246,251,261,268]
];

var volumes = [
  617,611,600,608,588,600,607,614,614,614,613,621,618,607,614,613,616,615,615,603,
  606,609,611,615,607,559,575,600,601,610,607,611,588,605,611,604,609,608,618,617,
  616,617,611,614,608,613,609,614,616,613,593,606,609,616,607,607,607,572,597,594,
  601,602,608,584,566,567,569,586,582,586,603,587,573,607,605,610,584,562,591,594,
  608,599,572,582,592,581,584,586,597,596,556,570,556,577,565,574,588,573,586,572,
  601,551,577,563,580,572,574,593,590,584,575,587,574,594,593,597,599,586,592,602
];

var dots = [1,2,5,8,11,12,13,14,16,26,27,32,35,38,39,40,41,43,49,50,51,61,62,65,66,69,70,71,72,74,77,81,82,84,89,92,94,95,97,98,99,100,101,102,103,104,105,106,107,108,109,111,112,113,114,118,119];

var ma60 = [[4,506],[76,500],[155,495],[259,489],[370,483],[459,481],[525,475],[560,472],[599,467],[657,456],[723,439],[755,430],[793,415],[832,392],[871,367],[887,359],[921,339],[940,326],[967,313],[988,305],[1013,292],[1058,271],[1086,261]];
var ma120 = [[4,509],[200,506],[348,501],[455,495],[529,491],[560,489],[618,482],[677,474],[747,463],[809,448],[832,440],[891,421],[949,402],[1011,387],[1086,367]];
var ma250 = [[4,510],[81,509],[137,507],[226,505],[344,503],[459,501],[560,498],[638,495],[723,489],[782,484],[832,476],[910,464],[988,453],[1086,440]];
var ma360 = [[540,505],[580,504],[653,502],[727,499],[786,494],[832,489],[910,479],[1003,472],[1086,462]];

var dif = [[4,827],[22,819],[31,817],[40,811],[49,809],[61,812],[81,815],[96,821],[113,826],[134,825],[157,822],[168,821],[188,817],[217,817],[224,815],[232,809],[240,805],[253,804],[264,804],[272,806],[287,815],[314,820],[333,821],[344,825],[367,830],[377,830],[394,826],[421,830],[431,829],[452,828],[459,823],[469,818],[488,818],[513,813],[522,808],[532,809],[551,801],[559,796],[568,797],[579,789],[587,775],[595,766],[605,770],[622,773],[641,771],[649,767],[658,775],[668,781],[686,785],[695,776],[704,767],[714,763],[724,762],[732,764],[741,754],[750,741],[758,738],[768,725],[787,704],[795,697],[805,697],[813,684],[823,672],[832,649],[844,652],[859,658],[868,664],[877,666],[886,685],[905,721],[914,716],[923,718],[932,716],[941,723],[958,771],[967,801],[976,822],[986,830],[996,820],[1005,811],[1014,811],[1022,802],[1041,807],[1051,812],[1058,818],[1068,835],[1077,845],[1087,849]];
var dea = [[4,827],[31,822],[40,817],[57,813],[81,814],[100,818],[121,823],[142,823],[172,822],[195,820],[222,818],[245,810],[264,806],[277,807],[295,812],[325,818],[344,821],[369,826],[402,827],[452,828],[469,823],[494,820],[532,812],[559,803],[574,799],[588,789],[605,777],[622,775],[649,771],[658,772],[686,781],[704,775],[724,768],[733,767],[750,755],[759,750],[771,738],[795,714],[806,707],[823,691],[833,676],[841,669],[859,662],[877,663],[886,670],[905,696],[914,703],[923,707],[932,710],[941,715],[950,726],[959,743],[976,782],[986,799],[996,805],[1014,809],[1022,806],[1041,807],[1058,811],[1077,829],[1087,835]];

function cx(i) {
  return Math.round(4.4 + i * 9.09);
}

function line(x1, y1, x2, y2, color, dash) {
  return '<path d="M' + x1 + ' ' + y1 + 'L' + x2 + ' ' + y2 + '" stroke="' + color + '"' +
    (dash ? ' stroke-dasharray="' + dash + '"' : '') + '/>';
}

function poly(points, color) {
  return '<polyline fill="none" stroke="' + color + '" points="' + points.join(' ') + '"/>';
}

function average(list, n, before) {
  return list.map(function (v, i) {
    var sum = 0;
    for (var k = i - n + 1; k <= i; k++) sum += k < 0 ? before : list[k];
    return [cx(i), (sum / n).toFixed(1)];
  });
}

function at(points, x) {
  for (var i = 1; i < points.length; i++) {
    var a = points[i - 1], b = points[i];
    if (x <= b[0]) return a[1] + (b[1] - a[1]) * (x - a[0]) / (b[0] - a[0]);
  }
  return points[points.length - 1][1];
}

function drawPrice() {
  var out = '';
  for (var g = 0; g < 13; g++) {
    var y = Math.round(97 + g * 33.67) + 0.5;
    out += line(0, y, 1118, y, GRID, '1 3');
  }
  dots.forEach(function (i) {
    out += '<rect x="' + (cx(i) - 1) + '" y="72" width="3" height="3" fill="#d020e0"/>';
  });
  candles.forEach(function (c, i) {
    var x = cx(i), color = c[0] == 'r' ? RED : CYAN;
    out += line(x + 0.5, c[1], x + 0.5, c[4], color);
    if (c[0] == 'r') {
      out += '<rect x="' + (x - 2.5) + '" y="' + (c[2] + 0.5) + '" width="6" height="' + (c[3] - c[2]) + '" fill="#000" stroke="' + RED + '"/>';
    } else {
      out += '<rect x="' + (x - 3) + '" y="' + c[2] + '" width="7" height="' + (c[3] - c[2] + 1) + '" fill="' + CYAN + '"/>';
    }
  });
  var close = candles.map(function (c) { return c[0] == 'r' ? c[2] : c[3]; });
  out += poly(ma120, '#0000d0') + poly(ma250, '#fff') + poly(ma360, '#ffff54') + poly(ma60, '#b0b0b0');
  out += poly(average(close, 30, 500), '#20d020') + poly(average(close, 20, 500), '#d030d8');
  out += poly(average(close, 10, 499), '#ffff54') + poly(average(close, 5, 499), '#fff');
  out += line(734, 328.5, 1118, 328.5, '#888');
  out += line(0, 152.5, 1118, 152.5, '#c8c8c8') + line(832.5, 71, 832.5, 531, '#c8c8c8');
  out += line(841, 76, 852, 80, '#aaa') + line(5, 499, 17, 504, '#aaa');
  document.getElementById('price').innerHTML = out;
}

function drawVolume() {
  var out = line(0, 576.5, 1118, 576.5, GRID, '1 3') + line(0, 602.5, 1118, 602.5, GRID, '1 3');
  volumes.forEach(function (top, i) {
    var x = cx(i);
    if (candles[i][0] == 'r') {
      out += '<rect x="' + (x - 2.5) + '" y="' + (top + 0.5) + '" width="6" height="' + (627 - top) + '" fill="none" stroke="' + RED + '"/>';
    } else {
      out += '<rect x="' + (x - 3) + '" y="' + top + '" width="7" height="' + (628 - top) + '" fill="' + CYAN + '"/>';
    }
  });
  out += poly(average(volumes, 5, 619), '#fff') + poly(average(volumes, 20, 619), '#ffff54');
  out += line(832.5, 547, 832.5, 629, '#c8c8c8');
  document.getElementById('volume').innerHTML = out;
}

function drawMacd() {
  var out = '';
  [668, 708, 747, 787, 867].forEach(function (y) {
    out += line(0, y + 0.5, 1118, y + 0.5, GRID, '1 3');
  });
  out += line(0, 827.5, 1118, 827.5, '#b00000', '2 1');
  candles.forEach(function (c, i) {
    var x = cx(i), d = Math.round((at(dea, x) - at(dif, x)) * 2);
    if (d) out += line(x + 0.5, 827, x + 0.5, 827 - d, d > 0 ? RED : '#60dada');
  });
  out += poly(dif, '#fff') + poly(dea, '#ffff54');
  out += line(832.5, 645, 832.5, 914, '#c8c8c8');
  document.getElementById('macd').innerHTML = out;
}

// time, price, volume, side, orders
var ticks = [
  ['14:55','6.70',687,'B',18],['14:55','6.70',791,'B',18],['14:56','6.70',659,'B',21],['14:56','6.70',90,'B',7],
  ['14:56','6.70',253,'B',15],['14:56','6.70',179,'B',20],['14:56','6.70',451,'B',19],['14:56','6.69',122,'S',10],
  ['14:56','6.69',19,'S',4],['14:56','6.70',121,'B',4],['14:56','6.69',355,'S',15],['14:56','6.70',106,'B',13],
  ['14:56','6.69',307,'S',13],['14:56','6.69',146,'S',14],['14:56','6.70',307,'B',18],['14:56','6.70',261,'B',17],
  ['14:56','6.70',256,'B',15],['14:56','6.70',89,'B',13],['14:56','6.70',126,'B',9],['14:56','6.70',199,'B',17],
  ['14:56','6.70',140,'B',11],['14:56','6.70',329,'B',24],['14:57','6.70',78,'B',6],['14:57','6.70',42,'B',2],
  ['15:00','6.71',10745,'',403]
];

document.getElementById('ticks').innerHTML = ticks.map(function (t) {
  return '<tr' + (t[2] > 500 ? ' class="big"' : '') + '><td>' + t[0] + '</td><td>' + t[1] + '</td><td>' + t[2] +
    '</td><td class="' + (t[3] == 'S' ? 'down' : 'up') + '">' + t[3] + '</td><td>' + t[4] + '</td></tr>';
}).join('');

drawPrice();
drawVolume();
drawMacd();
```
